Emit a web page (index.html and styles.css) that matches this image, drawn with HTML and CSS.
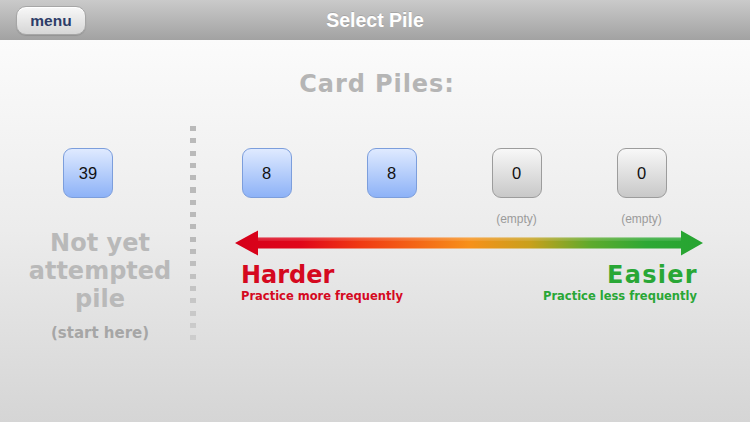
FILE: index.html
```html
<!DOCTYPE html>
<html lang="en">
<head>
<meta charset="utf-8">
<title>Select Pile</title>
<link rel="stylesheet" href="styles.css">
</head>
<body>
<header class="topbar">
  <div class="bar-side"><button class="menu-btn">menu</button></div>
  <h1 class="title">Select Pile</h1>
  <div class="bar-side"></div>
</header>
<main class="content">
  <h2 class="piles-heading">Card Piles:</h2>
  <div class="board">
    <section class="start-col">
      <div class="pile pile-blue start-pile">39</div>
      <p class="start-label">Not yet<br>attempted<br>pile</p>
      <p class="start-hint">(start here)</p>
    </section>
    <div class="divider"></div>
    <section class="progress">
      <div class="pile-row">
        <div class="pile-cell"><div class="pile pile-blue">8</div></div>
        <div class="pile-cell"><div class="pile pile-blue">8</div></div>
        <div class="pile-cell"><div class="pile pile-gray">0</div><span class="empty">(empty)</span></div>
        <div class="pile-cell"><div class="pile pile-gray">0</div><span class="empty">(empty)</span></div>
      </div>
      <svg class="arrow" width="468" height="26" viewBox="0 0 468 26">
        <defs>
          <linearGradient id="arrowFill" x1="0" y1="0" x2="468" y2="0" gradientUnits="userSpaceOnUse">
            <stop offset="0" stop-color="#d5001a"/>
            <stop offset="0.14" stop-color="#e0061a"/>
            <stop offset="0.27" stop-color="#f03a12"/>
            <stop offset="0.5" stop-color="#f7901a"/>
            <stop offset="0.63" stop-color="#c9a01c"/>
            <stop offset="0.76" stop-color="#5eaa2c"/>
            <stop offset="0.88" stop-color="#2da834"/>
            <stop offset="1" stop-color="#26a431"/>
          </linearGradient>
          <linearGradient id="arrowShine" x1="0" y1="0" x2="0" y2="26" gradientUnits="userSpaceOnUse">
            <stop offset="0.25" stop-color="#fff" stop-opacity="0.25"/>
            <stop offset="0.5" stop-color="#fff" stop-opacity="0"/>
          </linearGradient>
        </defs>
        <path d="M0 13 L23 0.5 L23 7.5 L446 7.5 L446 0.5 L468 13 L446 25.5 L446 18.5 L23 18.5 L23 25.5 Z" fill="url(#arrowFill)"/>
        <path d="M23 7.5 L446 7.5 L446 11 L23 11 Z" fill="url(#arrowShine)"/>
      </svg>
      <div class="legend">
        <div class="legend-side legend-hard">
          <div class="legend-big">Harder</div>
          <div class="legend-small">Practice more frequently</div>
        </div>
        <div class="legend-side legend-easy">
          <div class="legend-big">Easier</div>
          <div class="legend-small">Practice less frequently</div>
        </div>
      </div>
    </section>
  </div>
</main>
</body>
</html>
```
FILE: styles.css
```css
html, body {
  margin: 0;
  padding: 0;
}
body {
  width: 750px;
  height: 422px;
  overflow: hidden;
  font-family: "Liberation Sans", Arial, sans-serif;
  background: linear-gradient(#fbfbfb 40px, #ececec 230px, #d5d5d5 422px);
}

/* top bar */
.topbar {
  height: 40px;
  display: grid;
  grid-template-columns: 1fr auto 1fr;
  align-items: start;
  background: linear-gradient(#cacaca, #a2a2a2);
}
.bar-side {
  padding: 6px 0 0 16px;
}
.menu-btn {
  display: block;
  width: 70px;
  height: 29px;
  padding: 0;
  border: 1px solid #a6a6a6;
  border-radius: 10px;
  background: linear-gradient(#f8f8f8, #d6d6d6);
  box-shadow: inset 0 1px 0 #ffffff, 0 1px 1px rgba(0, 0, 0, 0.12);
  font-family: "Liberation Sans", Arial, sans-serif;
  font-weight: bold;
  font-size: 15.5px;
  line-height: 27px;
  color: #2d3c68;
}
.title {
  margin: 0;
  font-size: 19.5px;
  line-height: 40px;
  font-weight: bold;
  color: #ffffff;
  text-shadow: 0 -1px 0 rgba(0, 0, 0, 0.12);
}

/* content */
.content {
  padding-top: 30px;
}
.piles-heading {
  margin: 0;
  text-align: center;
  font-family: "DejaVu Sans", sans-serif;
  font-weight: bold;
  font-size: 24px;
  line-height: 28px;
  letter-spacing: 0.9px;
  color: #b5b5b5;
  padding-left: 4px;
}
.board {
  display: flex;
  margin-top: 28px;
}

/* left column */
.start-col {
  width: 190px;
  flex: none;
}
.start-pile {
  margin: 22px 0 0 63px;
}
.start-label {
  width: 200px;
  margin: 31px 0 0;
  text-align: center;
  font-family: "DejaVu Sans", sans-serif;
  font-weight: bold;
  font-size: 24px;
  line-height: 28px;
  color: #b9b9b9;
}
.start-hint {
  width: 200px;
  margin: 10px 0 0;
  text-align: center;
  font-family: "DejaVu Sans", sans-serif;
  font-weight: bold;
  font-size: 15px;
  line-height: 20px;
  color: #a6a6a6;
}

.divider {
  flex: none;
  width: 6px;
  height: 221px;
  background: repeating-linear-gradient(to bottom, #bababa 0 5px, transparent 5px 12.3px);
  -webkit-mask-image: linear-gradient(#000 55%, rgba(0, 0, 0, 0.45));
  mask-image: linear-gradient(#000 55%, rgba(0, 0, 0, 0.45));
}

/* piles */
.pile {
  box-sizing: border-box;
  width: 50px;
  height: 50px;
  border-radius: 9px;
  border: 1px solid;
  display: flex;
  align-items: center;
  justify-content: center;
  font-size: 16.5px;
  color: #111111;
}
.pile-blue {
  background: linear-gradient(#dfeaff, #8db2f7);
  border-color: #7c9edc;
}
.pile-gray {
  background: linear-gradient(#f8f8f8, #c8c8c8);
  border-color: #9c9c9c;
}

.progress {
  padding-left: 8px;
}
.pile-row {
  display: grid;
  grid-template-columns: repeat(4, 125px);
  height: 104px;
  padding-top: 22px;
  box-sizing: border-box;
}
.pile-cell {
  display: flex;
  flex-direction: column;
  align-items: center;
}
.empty {
  margin-top: 14px;
  font-size: 12px;
  line-height: 14px;
  color: #9b9b9b;
}

.arrow {
  display: block;
  margin-left: 31px;
}

.legend {
  display: flex;
  justify-content: space-between;
  width: 456px;
  margin: 7px 0 0 37px;
  font-family: "DejaVu Sans", sans-serif;
  font-weight: bold;
}
.legend-big {
  font-size: 24px;
  line-height: 24px;
}
.legend-small {
  margin-top: 3px;
  font-size: 11.5px;
  line-height: 12px;
}
.legend-hard {
  color: #d5091f;
}
.legend-easy {
  color: #29a736;
  text-align: right;
}
.legend-easy .legend-big {
  letter-spacing: 1.3px;
  margin-right: -1px;
}
```
